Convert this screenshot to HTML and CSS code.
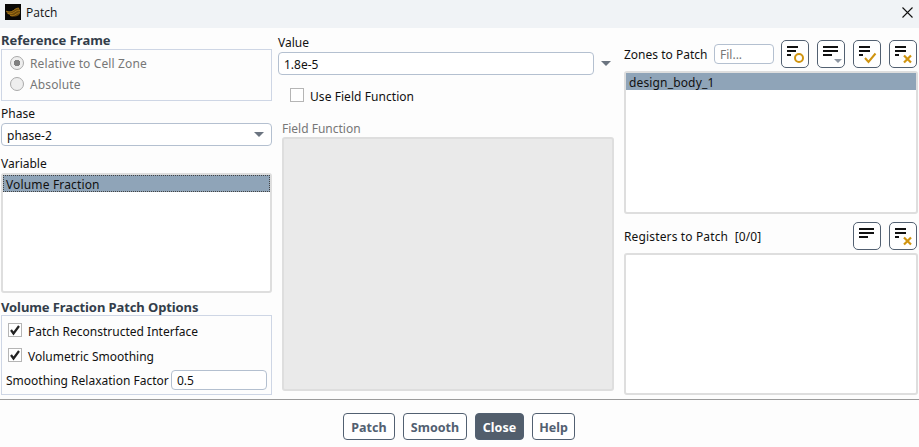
FILE: index.html
```html
<!DOCTYPE html>
<html lang="en">
<head>
  <meta charset="UTF-8">
  <title>Patch</title>
  <link rel="stylesheet" href="styles.css">
</head>
<body>

  <div class="titlebar">
    <svg class="logo" width="16" height="16" viewBox="0 0 16 16">
      <rect width="16" height="16" fill="#080705"/>
      <path d="M1 7.500 C4 8 6 8 8 6.500 S12 3.500 14 4 C15.500 6 15.500 9 14 11 C11 13 8 12.800 5.500 12 C6 11 3 10.500 2.500 9.500 Z" fill="#6b480a"/>
      <g fill="none" stroke="#b07c18" stroke-width=".8">
        <path d="M1 7.200 C4 8 6 8.500 8.500 6.500 S12 4 14 4.200"/>
        <path d="M2.500 9.300 C5 10 7 10 9.500 8.200 S13 6 15 6.500"/>
        <path d="M5 11.500 C8 12.200 9 11.500 11 10.200 S14 8.500 15 9"/>
      </g>
    </svg>
    <span class="title">Patch</span>
    <svg class="close-x" width="11" height="11" viewBox="0 0 11 11">
      <path d="M.5 .5 L10.500 10.500 M10.500 .5 L.5 10.500" stroke="#111" stroke-width="1.1"/>
    </svg>
  </div>

  <form id="patch-form">
    <div class="columns">

      <div class="left">
        <h2>Reference Frame</h2>
        <div class="group frame-group">
          <label class="choice disabled"><span class="radio on"></span><span class="text">Relative to Cell Zone</span></label>
          <label class="choice disabled"><span class="radio"></span><span class="text">Absolute</span></label>
        </div>

        <div class="label phase-label">Phase</div>
        <div class="field select">phase-2<span class="arrow"></span></div>

        <div class="label variable-label">Variable</div>
        <div class="list variable-list">
          <div class="item focused">Volume Fraction</div>
        </div>

        <h2 class="options-title">Volume Fraction Patch Options</h2>
        <div class="group options-group">
          <label class="check"><span class="box"><svg width="12" height="12" viewBox="0 0 12 12"><path d="M2 6 L4.500 9.500 L10 2" fill="none" stroke="#222" stroke-width="2.200"/></svg></span><span class="text">Patch Reconstructed Interface</span></label>
          <label class="check"><span class="box"><svg width="12" height="12" viewBox="0 0 12 12"><path d="M2 6 L4.500 9.500 L10 2" fill="none" stroke="#222" stroke-width="2.200"/></svg></span><span class="text">Volumetric Smoothing</span></label>
          <div class="factor"><span class="factor-label">Smoothing Relaxation Factor</span><span class="field">0.5</span></div>
        </div>
      </div>

      <div class="middle">
        <div class="label value-label">Value</div>
        <div class="value-row">
          <div class="field">1.8e-5</div>
          <span class="arrow"></span>
        </div>
        <label class="check use-field"><span class="box"></span><span class="text">Use Field Function</span></label>
        <div class="label field-label">Field Function</div>
        <div class="list field-list"></div>
      </div>

      <div class="right">
        <div class="tools">
          <span class="zones-label">Zones to Patch</span>
          <span class="field filter">Fil...</span>
          <span class="tool"><svg width="26" height="26" viewBox="0 0 26 26"><path d="M5 6h11M5 10h9M5 14h4" stroke="#111" stroke-width="2"/><circle cx="17" cy="17" r="4" fill="none" stroke="#d0940f" stroke-width="2"/></svg></span>
          <span class="tool"><svg width="26" height="26" viewBox="0 0 26 26"><path d="M5 6h15M5 10h15M5 14h9" stroke="#111" stroke-width="2"/><path d="M16 18h8l-4 4z" fill="#8e97a3"/></svg></span>
          <span class="tool"><svg width="26" height="26" viewBox="0 0 26 26"><path d="M5 6h11M5 10h11M5 14h4" stroke="#111" stroke-width="2"/><path d="M11 17l3.500 4 7-8.500" fill="none" stroke="#d0940f" stroke-width="2"/></svg></span>
          <span class="tool"><svg width="26" height="26" viewBox="0 0 26 26"><path d="M5 6h11M5 10h11M5 14h4" stroke="#111" stroke-width="2"/><path d="M14 14.500l7 7M21 14.500l-7 7" stroke="#d0940f" stroke-width="2.200"/></svg></span>
        </div>
        <div class="list zones-list">
          <div class="item">design_body_1</div>
        </div>

        <div class="tools registers">
          <span class="registers-label">Registers to Patch&nbsp; [0/0]</span>
          <span class="tool"><svg width="26" height="26" viewBox="0 0 26 26"><path d="M5 6h15M5 10h15M5 14h9" stroke="#111" stroke-width="2"/></svg></span>
          <span class="tool"><svg width="26" height="26" viewBox="0 0 26 26"><path d="M5 6h11M5 10h11M5 14h4" stroke="#111" stroke-width="2"/><path d="M14 14.500l7 7M21 14.500l-7 7" stroke="#d0940f" stroke-width="2.200"/></svg></span>
        </div>
        <div class="list registers-list"></div>
      </div>

    </div>

    <div class="buttons">
      <button type="button" class="patch">Patch</button>
      <button type="button" class="smooth">Smooth</button>
      <button type="button" class="primary">Close</button>
      <button type="button" class="help">Help</button>
    </div>
  </form>

</body>
</html>
```
FILE: styles.css
```css
* {
  box-sizing: border-box;
}

body {
  margin: 0;
  height: 447px;
  overflow: hidden;
  background: #fdfdfd;
  color: #111;
  font: 12px/16px "Noto Sans", sans-serif;
  white-space: nowrap;
}
.titlebar {
  display: flex;
  align-items: center;
  height: 28px;
  padding: 0 6px 4px 5px;
  background: #f0f3f6;
}
.title {
  flex: 1;
  margin-left: 5px;
  padding-top: 2px;
  font-family: "Open Sans", sans-serif;
}
.columns {
  display: flex;
  height: 372px;
  border-bottom: 1px solid #9b9b9b;
}
h2 {
  height: 16px;
  margin: 5px 0 0;
  font-size: 13px;
  line-height: 15px;
  color: #333d4a;
}
.label {
  height: 16px;
  line-height: 18px;
}

.left {
  width: 271px;
  margin-left: 1px;
}
.group {
  border: 1px solid #ced6e5;
}
.frame-group {
  height: 52px;
  padding: 2px 8px;
}
.choice {
  display: flex;
  align-items: center;
  height: 21px;
  letter-spacing: .13px;
}
.text {
  padding-top: 2px;
}
.disabled {
  color: #777;
}
.radio {
  width: 14px;
  height: 14px;
  margin-right: 6px;
  border: 1px solid #aaa;
  border-radius: 50%;
  background: #eee;
}
.radio.on {
  background: radial-gradient(circle, #808080 3px, #eee 3.5px);
}
.phase-label {
  margin-top: 5px;
  line-height: 16px;
}
.field {
  display: block;
  height: 23px;
  padding: 4px 5px 2px;
  border: 1px solid #b4c0d0;
  border-radius: 4px;
  background: #fff;
}
.select {
  display: flex;
  justify-content: space-between;
  margin-top: 1px;
  padding-right: 7px;
}
.arrow {
  border: 5px solid transparent;
  border-top-color: #6b7480;
  border-bottom: 0;
}
.select .arrow {
  height: 5px;
  margin-top: 4px;
}
.variable-label {
  margin-top: 9px;
}
.list {
  border: 2px solid #dedede;
  border-radius: 3px;
  background: #fff;
}
.variable-list {
  height: 120px;
  margin-top: 2px;
}
.item {
  height: 17px;
  padding-left: 3px;
  line-height: 20px;
  letter-spacing: .15px;
  background: #8fa4b8;
}
.focused {
  border: 1px dotted #444;
  padding-left: 2px;
  line-height: 18px;
}
.options-title {
  margin-top: 6px;
  line-height: 16px;
  letter-spacing: -.1px;
}
.options-group {
  height: 80px;
  padding: 2px 4px;
}
.check {
  display: flex;
  align-items: center;
  height: 25px;
  padding-left: 2px;
}
.options-group .box {
  margin-bottom: 1px;
}
.box {
  display: flex;
  width: 14px;
  height: 14px;
  margin-right: 6px;
  border: 1px solid #b5b5b5;
  background: #fff;
}
.factor {
  display: flex;
  align-items: center;
  margin-top: 2px;
}
.factor-label {
  width: 165px;
  padding-top: 1px;
}
.factor .field {
  width: 96px;
  height: 20px;
  padding: 2px 5px 0;
}

.middle {
  width: 336px;
  margin-left: 6px;
}
.value-label {
  margin-top: 6px;
}
.value-row {
  display: flex;
  align-items: center;
  margin-top: 2px;
}
.value-row .field {
  width: 316px;
  margin-right: 7px;
}
.use-field {
  margin: 8px 0 0 10px;
  letter-spacing: .06px;
}
.use-field .box {
  margin-bottom: 1px;
}
.use-field .text {
  padding-top: 2px;
}
.field-label {
  margin: 12px 0 0 4px;
  line-height: 17px;
  color: #777;
}
.field-list {
  height: 254px;
  margin: 1px 0 0 4px;
  background: #eaeaea;
}

.right {
  width: 294px;
  margin-left: 10px;
}
.tools {
  display: flex;
  align-items: center;
  gap: 8px;
  height: 28px;
  margin: 12px 1px 0 0;
}
.zones-label {
  width: 82px;
  padding-top: 2px;
}
.filter {
  width: 60px;
  height: 20px;
  margin-right: -1px;
  padding-top: 2px;
  color: #777;
}
.tool {
  width: 28px;
  height: 28px;
  border: 1px solid #526071;
  border-radius: 5px;
  background: #fff;
}
.tool svg {
  display: block;
}
.zones-list {
  height: 143px;
  margin-top: 3px;
}
.registers {
  margin-top: 8px;
}
.registers-label {
  flex: 1;
  padding-top: 2px;
  letter-spacing: .14px;
}
.registers-list {
  height: 142px;
  margin-top: 3px;
}

.buttons {
  display: flex;
  gap: 8px;
  margin: 13px 0 0 343px;
}
button {
  height: 27px;
  padding: 1px 0 0;
  border: 1px solid #526071;
  border-radius: 4px;
  background: #fff;
  color: #526071;
  font: bold 12.5px "Noto Sans", sans-serif;
}
.patch {
  width: 52px;
}
.smooth {
  width: 64px;
}
.primary {
  width: 49px;
  background: #525e6c;
  color: #fff;
}
.help {
  width: 43px;
}
```
